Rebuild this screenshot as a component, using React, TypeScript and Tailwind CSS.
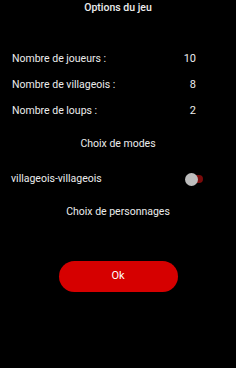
export default function App() {
  const rows = [
    { label: 'Nombre de joueurs :', value: '10' },
    { label: 'Nombre de villageois :', value: '8' },
    { label: 'Nombre de loups :', value: '2' },
  ]

  return (
    <div
      className="w-[236px] h-[368px] bg-black text-[#ececec] text-[10.5px] overflow-hidden"
      style={{ fontFamily: 'Roboto, "Noto Sans", sans-serif' }}
    >
      {/* Title */}
      <div className="pt-[1px] h-[16px] text-center font-medium leading-[14px]">Options du jeu</div>

      {/* Counters */}
      <div className="mt-[36px] flex flex-col gap-[12px]">
        {rows.map((row) => (
          <div key={row.label} className="flex items-center h-[14px] pl-[12px] pr-[40px]">
            <span className="flex-1">{row.label}</span>
            <span className="text-right text-[11px]">{row.value}</span>
          </div>
        ))}
      </div>

      {/* Modes */}
      <div className="mt-[19px] text-center h-[14px] leading-[14px]">Choix de modes</div>

      <div className="mt-[21px] flex items-center h-[14px] pl-[11px] pr-[31px]">
        <span className="flex-1">villageois-villageois</span>
        <div className="relative w-[20px] h-[14px] flex items-center">
          <div className="absolute left-[6px] w-[12px] h-[8px] rounded-full bg-[#7a0a0a]" />
          <div className="absolute left-0 w-[13px] h-[13px] rounded-full bg-[#bdbdbd]" />
        </div>
      </div>

      <div className="mt-[19px] text-center h-[14px] leading-[14px]">Choix de personnages</div>

      {/* Ok */}
      <div className="mt-[42px] flex justify-center">
        <button className="w-[119px] h-[31px] rounded-full bg-[#d60000] text-white text-[11px]">
          Ok
        </button>
      </div>
    </div>
  )
}
